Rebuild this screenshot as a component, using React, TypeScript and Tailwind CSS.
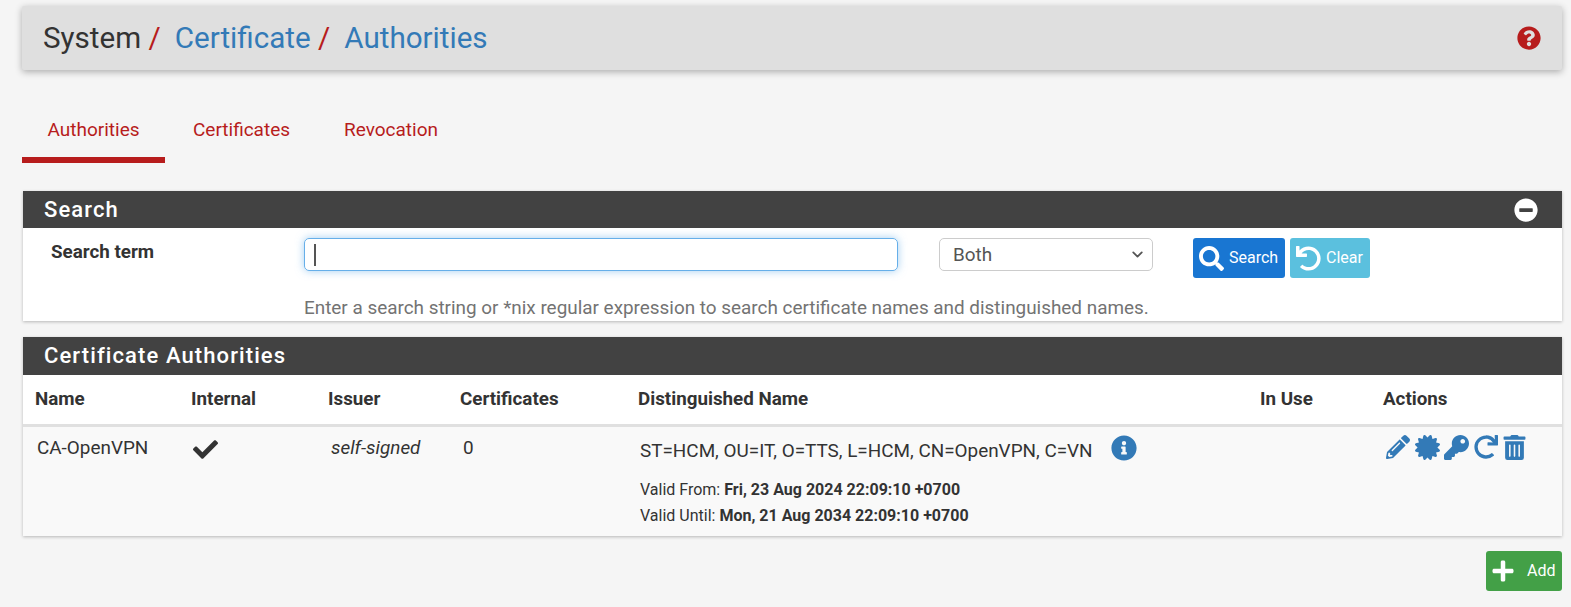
import {
  FaCertificate,
  FaCheck,
  FaInfoCircle,
  FaKey,
  FaMinusCircle,
  FaPencilAlt,
  FaPlus,
  FaQuestionCircle,
  FaRedo,
  FaSearch,
  FaTrashAlt,
  FaUndo,
} from 'react-icons/fa';
import { ChevronDown } from 'lucide-react';

const roboto = { fontFamily: 'Roboto, sans-serif' };

function PanelHeading({ title, collapse, tall }: { title: string; collapse?: boolean; tall?: boolean }) {
  return (
    <div className={`${tall ? 'h-[38px] pb-px' : 'h-[37px]'} bg-[#424242] pl-[21px] pr-6 flex items-center justify-between text-white text-[22px] font-medium tracking-[1.1px]`}>
      <span>{title}</span>
      {collapse && <FaMinusCircle size={24} />}
    </div>
  );
}

export default function App() {
  return (
    <div className="w-[1571px] h-[607px] overflow-hidden bg-[#f5f5f5] text-[#333] px-[22px] pt-[6px]" style={roboto}>
      {/* Breadcrumb */}
      <header className="w-[1540px] h-[64px] bg-[#dfdfdf] shadow-[0_2px_7px_rgba(0,0,0,0.3)] rounded-[2px] pl-[21px] pr-[9px] flex items-center justify-between text-[29.6px]">
        <h1 className="font-normal">
          System <span className="text-[#b71c1c]">/</span>
          <span className="text-[#337ab7] ml-[14px]">Certificate</span> <span className="text-[#b71c1c]">/</span>
          <span className="text-[#337ab7] ml-[14px]">Authorities</span>
        </h1>
        <FaQuestionCircle size={24} className="text-[#b71c1c] mr-[12px]" />
      </header>

      {/* Tabs */}
      <nav className="mt-[30px] h-[63px] flex text-[19px] text-[#b71c1c]">
        <a className="w-[143px] pt-[16px] text-center border-b-[6px] border-[#b71c1c]">Authorities</a>
        <a className="w-[153px] pt-[16px] text-center">Certificates</a>
        <a className="pl-[26px] pt-[16px]">Revocation</a>
      </nav>

      {/* Search panel */}
      <section className="mt-[28px] ml-px w-[1539px] h-[130px] bg-white shadow-[0_1px_3px_rgba(0,0,0,0.25)]">
        <PanelHeading title="Search" collapse />
        <div className="flex items-start pt-[10px]">
          <label className="w-[281px] pl-[28px] pt-[4px] text-[18.8px] font-bold leading-[20px]">Search term</label>
          <div className="w-[594px] h-[33px] border border-[#66afe9] rounded-[5px] shadow-[0_0_8px_rgba(102,175,233,0.6)] flex items-center pl-[9px]">
            <span className="w-[2px] h-[22px] bg-[#555]" />
          </div>
          <div className="ml-[41px] w-[214px] h-[33px] border border-[#ccc] rounded-[5px] flex items-center justify-between pl-[13px] pr-[6px] text-[18.9px] text-[#555]">
            <span className="pt-px">Both</span>
            <ChevronDown size={17} strokeWidth={2.5} />
          </div>
          <button className="ml-[40px] w-[92px] h-[40px] bg-[#1976d2] rounded-[3px] text-white text-[16px] flex items-center pl-[6px] gap-[5px]">
            <FaSearch size={25} />
            Search
          </button>
          <button className="ml-[5px] w-[80px] h-[40px] bg-[#5bc0de] rounded-[3px] text-white text-[16px] flex items-center pl-[6px] gap-[5px]">
            <FaUndo size={25} />
            Clear
          </button>
        </div>
        <p className="ml-[281px] mt-[18px] text-[18.9px] leading-[24px] text-[#737373]">
          Enter a search string or *nix regular expression to search certificate names and distinguished names.
        </p>
      </section>

      {/* Certificate authorities */}
      <section className="mt-[16px] ml-px w-[1539px] h-[199px] bg-white shadow-[0_1px_3px_rgba(0,0,0,0.25)]">
        <PanelHeading title="Certificate Authorities" tall />
        <table className="w-full table-fixed text-[18.9px]">
          <colgroup>
            <col className="w-[156px]" />
            <col className="w-[138px]" />
            <col className="w-[131px]" />
            <col className="w-[178px]" />
            <col className="w-[622px]" />
            <col className="w-[124px]" />
            <col />
          </colgroup>
          <thead>
            <tr className="h-[50px] border-b-[3px] border-[#e0e0e0] text-left text-[18.8px]">
              <th className="pl-3 font-bold">Name</th>
              <th className="pl-3 font-bold">Internal</th>
              <th className="pl-[11px] font-bold">Issuer</th>
              <th className="pl-3 font-bold">Certificates</th>
              <th className="pl-[12px] font-bold">Distinguished Name</th>
              <th className="pl-[12px] font-bold">In Use</th>
              <th className="pl-[11px] font-bold">Actions</th>
            </tr>
          </thead>
          <tbody>
            <tr className="h-[111px] bg-[#f9f9f9] align-top">
              <td className="pl-[14px] pt-[9px] leading-[24px]">CA-OpenVPN</td>
              <td className="pl-[14px] pt-[10px]"><FaCheck size={25} /></td>
              <td className="pl-[14px] pt-[9px] leading-[24px] italic">self-signed</td>
              <td className="pl-[15px] pt-[9px] leading-[24px]">0</td>
              <td className="pl-[14px] pt-[10px]">
                <div className="flex items-start h-[34px]">
                  <span className="leading-[28px]">ST=HCM, OU=IT, O=TTS, L=HCM, CN=OpenVPN, C=VN</span>
                  <FaInfoCircle size={26} className="ml-[18px] -mt-[2px] text-[#337ab7]" />
                </div>
                <div className="mt-[6px] text-[16px] leading-[26px]">
                  <div>Valid From: <b>Fri, 23 Aug 2024 22:09:10 +0700</b></div>
                  <div>Valid Until: <b>Mon, 21 Aug 2034 22:09:10 +0700</b></div>
                </div>
              </td>
              <td />
              <td className="pl-[14px] pt-[8px]">
                <div className="flex items-center gap-[4.5px] text-[#337ab7]">
                  <FaPencilAlt size={24} />
                  <FaCertificate size={25} />
                  <FaKey size={25} />
                  <FaRedo size={24} />
                  <FaTrashAlt size={25} />
                </div>
              </td>
            </tr>
          </tbody>
        </table>
      </section>

      {/* Add */}
      <div className="mt-[15px] flex justify-end w-[1540px]">
        <button className="w-[76px] h-[40px] bg-[#43a047] rounded-[3px] text-white text-[16px] flex items-center pl-[5px] gap-[12px]">
          <FaPlus size={24} />
          Add
        </button>
      </div>
    </div>
  );
}
